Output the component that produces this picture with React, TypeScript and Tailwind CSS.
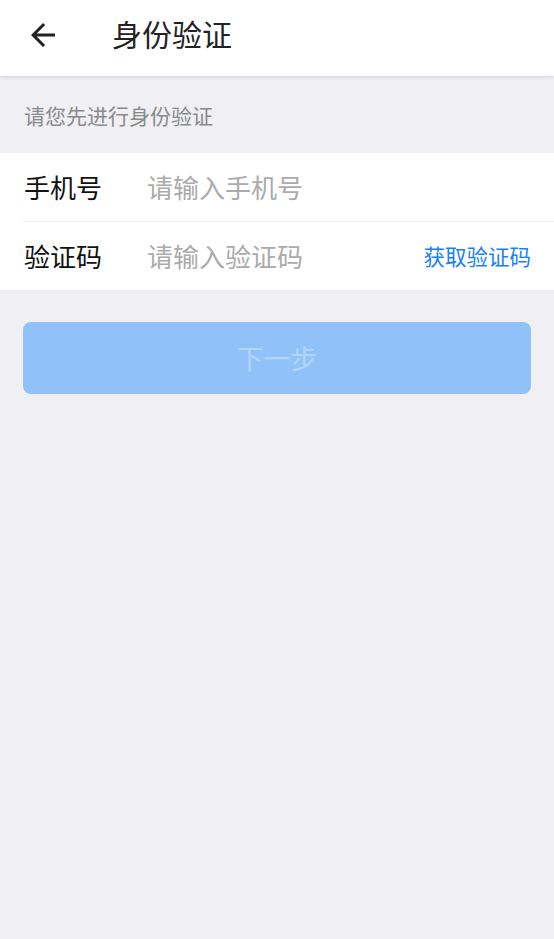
import React from "react";

export default function App() {
  const font = { fontFamily: '"Noto Sans CJK SC", "Noto Sans", sans-serif' };
  return (
    <div className="min-h-[939px] w-full bg-[#efeff4]" style={font}>
      <header className="relative z-10 flex h-[76px] items-center bg-white pb-[10px] shadow-[0_1px_4px_rgba(0,0,0,0.12)]">
        <div className="ml-[25px] mt-[4px] flex h-[36px] w-[36px] items-center justify-center">
          <svg width="36" height="36" viewBox="0 0 24 24" fill="#222222">
            <path d="M20 11H7.83l5.59-5.59L12 4l-8 8 8 8 1.41-1.41L7.83 13H20v-2z" />
          </svg>
        </div>
        <h1 className="ml-[51px] text-[30px] leading-none text-[#222222]">身份验证</h1>
      </header>
      <div className="flex h-[77px] items-center px-6 pt-[3px] text-[21px] text-[#8a8a8a]">
        请您先进行身份验证
      </div>
      <div className="bg-white pl-[23px]">
        <div className="flex h-[69px] items-center border-b border-[#efefef] pr-6">
          <span className="w-[124px] pl-[1px] text-[26px] leading-none text-[#111111]">手机号</span>
          <input
            className="h-[30px] min-w-0 flex-1 bg-transparent text-[26px] leading-[30px] text-[#111111] outline-none placeholder:text-[#ababab]"
            placeholder="请输入手机号"
            style={font}
          />
        </div>
        <div className="flex h-[68px] items-center pr-6">
          <span className="w-[124px] pl-[1px] text-[26px] leading-none text-[#111111]">验证码</span>
          <input
            className="h-[30px] min-w-0 flex-1 bg-transparent text-[26px] leading-[30px] text-[#111111] outline-none placeholder:text-[#ababab]"
            placeholder="请输入验证码"
            style={font}
          />
          <span className="mr-[-1px] text-[21.5px] leading-none text-[#1a80f5]">获取验证码</span>
        </div>
      </div>
      <div className="px-[23px] pt-8">
        <button
          className="flex h-[72px] w-full items-center justify-center rounded-lg bg-[#90c1f8] text-[27px] text-[#b4d5fb]"
          style={font}
        >
          下一步
        </button>
      </div>
    </div>
  );
}
